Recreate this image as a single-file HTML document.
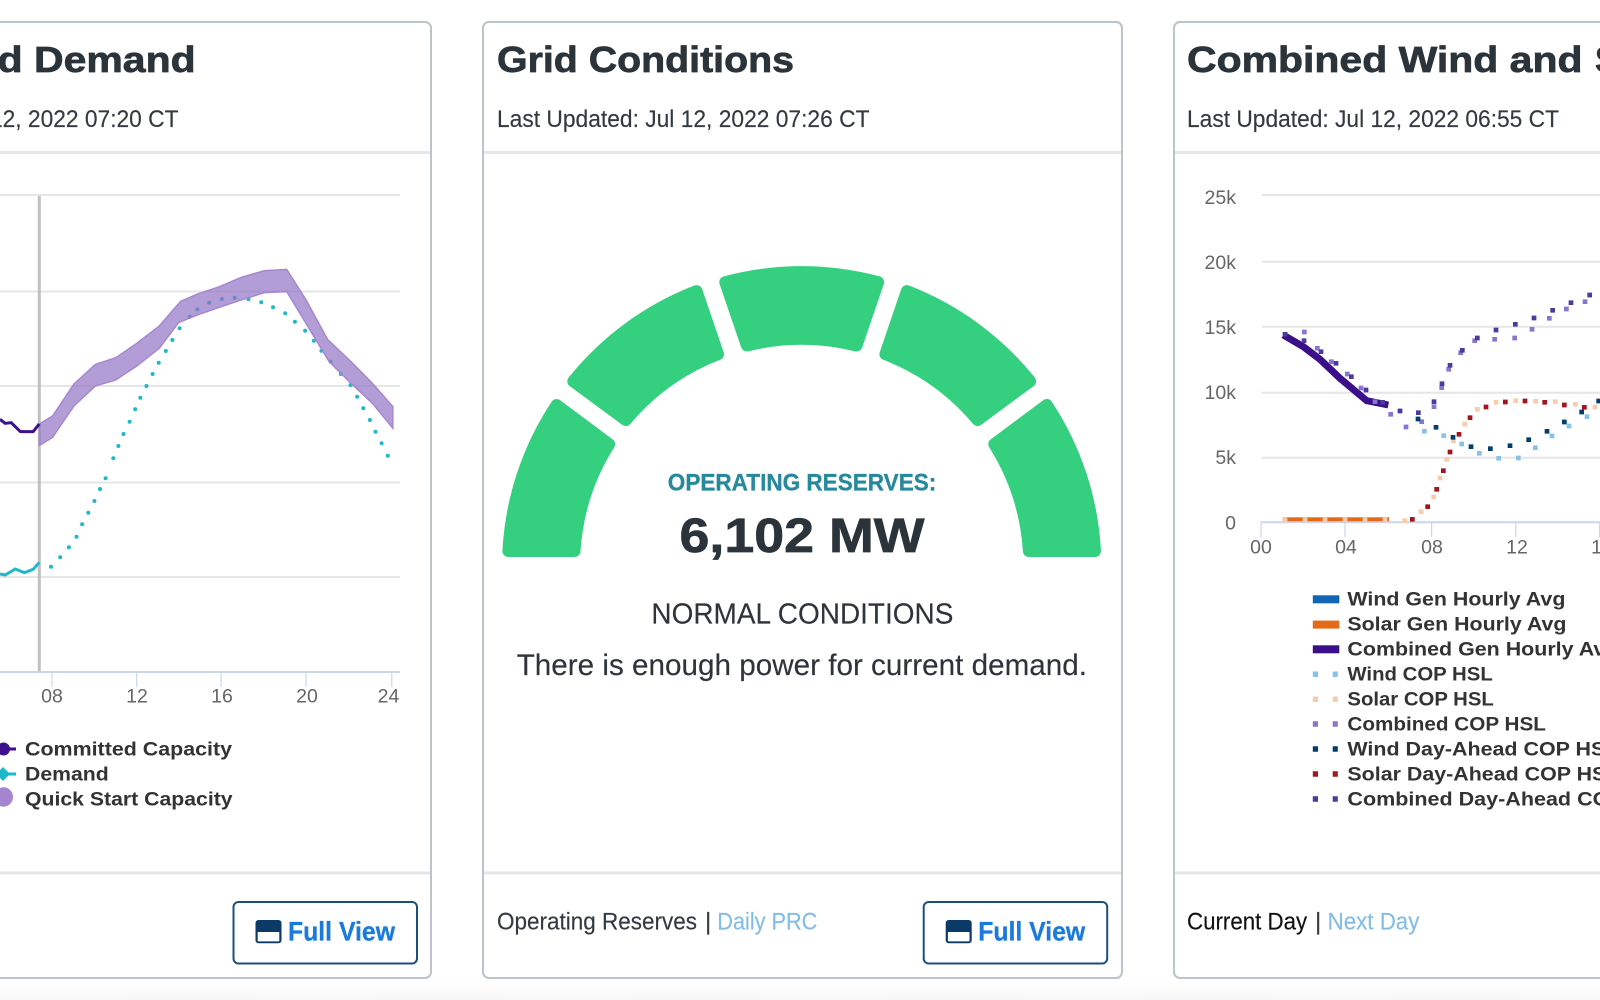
<!DOCTYPE html>
<html lang="en"><head><meta charset="utf-8"><title>Grid Conditions</title>
<style>
html,body{margin:0;padding:0;background:#fff;width:1600px;height:1000px;overflow:hidden}
svg{display:block;position:absolute;left:0;top:0}
text{font-family:"Liberation Sans",sans-serif}
.t{font-size:36px;font-weight:700;fill:#2c343b;stroke:#2c343b;stroke-width:.7px}
.u{font-size:24px;fill:#343a40;stroke:#343a40;stroke-width:.15px}
.f{font-size:24px;fill:#343a40;stroke:#343a40;stroke-width:.15px}
.v{font-size:26.5px;font-weight:700;fill:#1a7bdc;stroke:#1a7bdc;stroke-width:.3px}
.a{font-size:19.5px;fill:#666}
.l{font-size:19px;font-weight:700;fill:#333}
.gr{stroke:#e6e6e6;stroke-width:2;fill:none}
.ax{stroke:#ccd6eb;stroke-width:2;fill:none}
.tk{stroke:#ccd6eb;stroke-width:1.2;fill:none}
.card{fill:#fff;stroke:#bcc3c9;stroke-width:2}
.dv{stroke:#e4e6e8;stroke-width:3}
.btn{fill:#fff;stroke:#1d4f7c;stroke-width:2}
.dots{fill:none;stroke-width:14;stroke-linecap:square}
</style></head><body>
<svg width="1600" height="1000" viewBox="0 0 1600 1000" xmlns="http://www.w3.org/2000/svg">
<defs><linearGradient id="bg" x1="0" y1="0" x2="0" y2="1"><stop offset="0" stop-color="#fff"/><stop offset="1" stop-color="#f7f7f7"/></linearGradient></defs>
<rect x="0" y="980" width="1600" height="20" fill="url(#bg)"/>

<!-- cards -->
<rect class="card" x="-20" y="22" width="451" height="956" rx="6"/>
<rect class="card" x="483" y="22" width="639" height="956" rx="6"/>
<rect class="card" x="1174" y="22" width="480" height="956" rx="6"/>
<line class="dv" x1="0" x2="430" y1="152.5" y2="152.5"/>
<line class="dv" x1="484" x2="1121" y1="152.5" y2="152.5"/>
<line class="dv" x1="1175" x2="1600" y1="152.5" y2="152.5"/>
<line class="dv" x1="0" x2="430" y1="873" y2="873"/>
<line class="dv" x1="484" x2="1121" y1="873" y2="873"/>
<line class="dv" x1="1175" x2="1600" y1="873" y2="873"/>

<!-- headers -->
<text class="t" x="-2.4" y="72" textLength="198" lengthAdjust="spacingAndGlyphs">d Demand</text>
<text class="u" x="-193.5" y="127" textLength="372" lengthAdjust="spacingAndGlyphs">Last Updated: Jul 12, 2022 07:20 CT</text>
<text class="t" x="497" y="72" textLength="297" lengthAdjust="spacingAndGlyphs">Grid Conditions</text>
<text class="u" x="497" y="127" textLength="372.5" lengthAdjust="spacingAndGlyphs">Last Updated: Jul 12, 2022 07:26 CT</text>
<text class="t" x="1187" y="72" textLength="395.5" lengthAdjust="spacingAndGlyphs">Combined Wind and</text>
<text class="t" x="1595" y="72">S</text>
<text class="u" x="1187" y="127" textLength="372" lengthAdjust="spacingAndGlyphs">Last Updated: Jul 12, 2022 06:55 CT</text>

<!-- left chart -->
<g>
<line class="gr" x1="0" x2="400" y1="195" y2="195"/>
<line class="gr" x1="0" x2="400" y1="291.5" y2="291.5"/>
<line class="gr" x1="0" x2="400" y1="386" y2="386"/>
<line class="gr" x1="0" x2="400" y1="482.5" y2="482.5"/>
<line class="gr" x1="0" x2="400" y1="577" y2="577"/>
<line class="ax" x1="0" x2="400" y1="672" y2="672"/>
<path class="tk" d="M52 672V687M136.7 672V687M221 672V687M306 672V687M391.8 672V687"/>
<line x1="39.3" x2="39.3" y1="196" y2="671" stroke="#c0c0c0" stroke-width="3"/>
<path fill="none" stroke="#1fb8c9" stroke-width="4" stroke-linecap="round" d="M51 566.7h.01M60.2 557.3h.01M68.9 547.3h.01M76.5 536.7h.01M82.1 524.3h.01M88.3 512.7h.01M94.4 501h.01M100 489h.01M105.6 478.3h.01M113.3 458.3h.01M118.4 446h.01M123.5 434h.01M129.6 421.7h.01M135.2 409.3h.01M140.3 397.7h.01M146.4 386h.01M152.6 374h.01M158.7 362.7h.01M165.8 351h.01M172.4 340h.01M179.6 328.3h.01M189.8 316.7h.01M197.4 309.3h.01M209.2 302.7h.01M221.9 299h.01M234.7 297.7h.01M248.5 299.3h.01M261.2 302.3h.01M273 307.3h.01M285.2 313.3h.01M294.9 321.7h.01M305.1 330.7h.01M313.8 340.7h.01M321.4 350.7h.01M330.6 361.7h.01M340.8 374h.01M350.5 385h.01M357.1 396.7h.01M363.3 408.3h.01M369.9 420h.01M375.5 431.7h.01M381.6 443.3h.01M387.8 455.7h.01"/>
<g transform="scale(.5102 .33333)">
<path fill="#9273c4" fill-opacity=".7" stroke="#a585d0" stroke-width="1.4" vector-effect="non-scaling-stroke" d="M77 1272L103 1248 145 1152 187 1093 227 1073 268 1030 312 978 354 904 387 882 430 860 473 832 518 812 562 808 600 900 642 1018 688 1085 730 1150 770 1220 770 1285 730 1210 688 1150 645 1085 600 971 562 875 518 878 473 900 430 922 387 945 350 968 312 1045 268 1098 227 1140 187 1158 145 1218 103 1312 77 1337Z"/>
<path fill="none" stroke="#3d0f8c" stroke-width="3" vector-effect="non-scaling-stroke" d="M0 1258L10 1270 22 1268 40 1295 65 1295 77 1272"/>
<path fill="none" stroke="#1fb8c9" stroke-width="3" vector-effect="non-scaling-stroke" d="M0 1722L10 1725 30 1707 48 1718 65 1708 77 1687"/>
</g>
<g class="a" text-anchor="middle">
<text x="52" y="702.7">08</text><text x="137" y="702.7">12</text><text x="222" y="702.7">16</text><text x="307" y="702.7">20</text><text x="388.5" y="702.7">24</text>
</g>
<line x1="0" x2="16" y1="749" y2="749" stroke="#3d0f8c" stroke-width="3"/>
<circle cx="3.5" cy="749" r="6.5" fill="#3d0f8c"/>
<line x1="0" x2="16" y1="774" y2="774" stroke="#1fb8c9" stroke-width="3"/>
<path d="M3 767L10 774 3 781-4 774Z" fill="#1fb8c9"/>
<ellipse cx="3.5" cy="797" rx="9.5" ry="9.7" fill="#a585d0"/>
<text class="l" x="25" y="755.5" textLength="207" lengthAdjust="spacingAndGlyphs">Committed Capacity</text>
<text class="l" x="25" y="780.5" textLength="83.7" lengthAdjust="spacingAndGlyphs">Demand</text>
<text class="l" x="25" y="805.5" textLength="207.6" lengthAdjust="spacingAndGlyphs">Quick Start Capacity</text>
</g>

<!-- gauge -->
<g fill="#35d07f" stroke="#35d07f" stroke-width="12" stroke-linejoin="round">
<path d="M508.4 551A294 294 0 0 1 556.6 405L609.1 444.2A228 228 0 0 0 574.5 551Z"/>
<path d="M573.3 381.3A294 294 0 0 1 696.5 291.1L718 354.2A228 228 0 0 0 625.8 420Z"/>
<path d="M725.3 282.2A294 294 0 0 1 878.1 282.2L856.5 345.5A228 228 0 0 0 746.9 345.5Z"/>
<path d="M906.9 291.1A294 294 0 0 1 1030.1 381.3L977.6 420A228 228 0 0 0 885.4 354.2Z"/>
<path d="M1046.8 405A294 294 0 0 1 1095 551L1028.9 551A228 228 0 0 0 994.3 444.2Z"/>
</g>
<text x="667.8" y="490.7" font-size="24" font-weight="700" fill="#26899c" stroke="#26899c" stroke-width=".3" textLength="268.5" lengthAdjust="spacingAndGlyphs">OPERATING RESERVES:</text>
<text x="679.5" y="551.8" font-size="48" font-weight="700" fill="#2c343b" stroke="#2c343b" stroke-width=".7" textLength="245" lengthAdjust="spacingAndGlyphs">6,102 MW</text>
<text x="651.4" y="623.3" font-size="29" fill="#2e343a" stroke="#2e343a" stroke-width=".15" textLength="302" lengthAdjust="spacingAndGlyphs">NORMAL CONDITIONS</text>
<text x="516.7" y="675" font-size="30" fill="#2e343a" stroke="#2e343a" stroke-width=".15" textLength="570.3" lengthAdjust="spacingAndGlyphs">There is enough power for current demand.</text>

<!-- right chart -->
<line class="gr" x1="1261.7" x2="1600" y1="195" y2="195"/>
<line class="gr" x1="1261.7" x2="1600" y1="261.7" y2="261.7"/>
<line class="gr" x1="1261.7" x2="1600" y1="326.7" y2="326.7"/>
<line class="gr" x1="1261.7" x2="1600" y1="392.7" y2="392.7"/>
<line class="gr" x1="1261.7" x2="1600" y1="457.7" y2="457.7"/>
<rect x="1282.7" y="517.3" width="106.3" height="4.5" fill="#e46a1a"/>
<line class="ax" x1="1260.7" x2="1600" y1="522.3" y2="522.3"/>
<path class="tk" d="M1261 522V537M1345 522V537M1431.6 522V537M1515.8 522V537M1599.5 522V537"/>
<g transform="translate(1260 300) scale(.33333)">
<path fill="none" stroke="#3b0f8a" stroke-width="21" d="M70 105L130 140 180 178 240 235 320 302 385 315"/>
<path class="dots" stroke="#f7ccaa" d="M75 660h.1M135 660h.1M195 660h.1M255 660h.1M315 660h.1M375 660h.1M434 662h.1M483 635h.1M521 591h.1M540 534h.1M560 478h.1M580 422h.1M614 372h.1M652 328h.1M708 307h.1M767 302h.1M827 304h.1M886 305h.1M946 313h.1M1005 321h.1"/>
<path class="dots" stroke="#87c3e8" d="M493 394h.1M551 407h.1M605 432h.1M658 460h.1M716 475h.1M775 474h.1M826 443h.1M876 408h.1M927 378h.1M981 350h.1"/>
<path class="dots" stroke="#8b74d0" d="M133 96h.1M172 145h.1M214 185h.1M262 222h.1M303 264h.1M345 305h.1M392 343h.1M438 381h.1M485 365h.1M522 320h.1M545 263h.1M566 208h.1M602 158h.1M644 122h.1M704 118h.1M764 114h.1M816 88h.1M868 55h.1M919 27h.1M975 5h.1"/>
<path class="dots" stroke="#003f6b" d="M474 357h.1M528 382h.1M579 412h.1M633 440h.1M691 446h.1M750 437h.1M806 419h.1M861 394h.1M913 366h.1M965 336h.1M1016 303h.1"/>
<path class="dots" stroke="#a5141c" d="M457 658h.1M503 620h.1M530 568h.1M550 512h.1M570 456h.1M597 403h.1M630 353h.1M678 321h.1M736 306h.1M795 303h.1M854 307h.1M913 315h.1M973 322h.1"/>
<path class="dots" stroke="#4b3a9e" d="M75 103h.1M132 122h.1M183 155h.1M228 190h.1M274 230h.1M318 270h.1M368 307h.1M420 333h.1M475 338h.1M522 305h.1M546 251h.1M570 196h.1M607 151h.1M652 114h.1M708 90h.1M766 73h.1M822 54h.1M878 31h.1M933 8h.1M989 -15h.1"/>
</g>
<g class="a" text-anchor="end">
<text x="1236" y="204">25k</text><text x="1236" y="269">20k</text><text x="1236" y="334">15k</text><text x="1236" y="399">10k</text><text x="1236" y="464">5k</text><text x="1236" y="529.3">0</text>
</g>
<g class="a" text-anchor="middle">
<text x="1261" y="553.3">00</text><text x="1346" y="553.3">04</text><text x="1432" y="553.3">08</text><text x="1517" y="553.3">12</text><text x="1602" y="553.3">16</text>
</g>
<rect x="1312.8" y="595.3" width="26.5" height="8" fill="#1265b4"/>
<rect x="1312.8" y="620.6" width="26.5" height="8" fill="#e46a1a"/>
<rect x="1312.8" y="645.3" width="26.5" height="8" fill="#3b0f8a"/>
<path d="M1312.8 671.5h5.2v5.5h-5.2zM1332.7 671.5h5.1v5.5h-5.1z" fill="#87c3e8"/>
<path d="M1312.8 696.5h5.2v5.5h-5.2zM1332.7 696.5h5.1v5.5h-5.1z" fill="#f7ccaa"/>
<path d="M1312.8 721.3h5.2v5.5h-5.2zM1332.7 721.3h5.1v5.5h-5.1z" fill="#8b74d0"/>
<path d="M1312.8 746.3h5.2v5.5h-5.2zM1332.7 746.3h5.1v5.5h-5.1z" fill="#003f6b"/>
<path d="M1312.8 771.3h5.2v5.5h-5.2zM1332.7 771.3h5.1v5.5h-5.1z" fill="#a5141c"/>
<path d="M1312.8 796.3h5.2v5.5h-5.2zM1332.7 796.3h5.1v5.5h-5.1z" fill="#4b3a9e"/>
<text class="l" x="1347.4" y="605.7" textLength="218" lengthAdjust="spacingAndGlyphs">Wind Gen Hourly Avg</text>
<text class="l" x="1347.4" y="630.7" textLength="219" lengthAdjust="spacingAndGlyphs">Solar Gen Hourly Avg</text>
<text class="l" x="1347.4" y="655.7" textLength="271" lengthAdjust="spacingAndGlyphs">Combined Gen Hourly Avg</text>
<text class="l" x="1347.4" y="680.7" textLength="145.4" lengthAdjust="spacingAndGlyphs">Wind COP HSL</text>
<text class="l" x="1347.4" y="705.7" textLength="146.4" lengthAdjust="spacingAndGlyphs">Solar COP HSL</text>
<text class="l" x="1347.4" y="730.7" textLength="198.5" lengthAdjust="spacingAndGlyphs">Combined COP HSL</text>
<text class="l" x="1347.4" y="755.7" textLength="271" lengthAdjust="spacingAndGlyphs">Wind Day-Ahead COP HSL</text>
<text class="l" x="1347.4" y="780.7" textLength="272" lengthAdjust="spacingAndGlyphs">Solar Day-Ahead COP HSL</text>
<text class="l" x="1347.4" y="805.7" textLength="325" lengthAdjust="spacingAndGlyphs">Combined Day-Ahead COP HSL</text>

<!-- footers -->
<text class="f" x="497" y="929.3" textLength="200" lengthAdjust="spacingAndGlyphs">Operating Reserves</text>
<text class="f" x="705" y="929.3">|</text>
<text class="f" x="717.3" y="929.3" style="fill:#82bde5;stroke:#82bde5" textLength="100" lengthAdjust="spacingAndGlyphs">Daily PRC</text>
<text class="f" x="1187" y="929.3" style="fill:#111;stroke:#111" textLength="120.2" lengthAdjust="spacingAndGlyphs">Current Day</text>
<text class="f" x="1315" y="929.3">|</text>
<text class="f" x="1327.6" y="929.3" style="fill:#82bde5;stroke:#82bde5" textLength="91.8" lengthAdjust="spacingAndGlyphs">Next Day</text>

<!-- buttons -->
<g>
<rect class="btn" x="233.5" y="902" width="183.5" height="61.5" rx="5"/>
<rect x="255.5" y="920" width="26" height="23.3" rx="3" fill="#0b3a66"/>
<rect x="257.7" y="932" width="21.6" height="9.4" rx=".5" fill="#fff"/>
<text class="v" x="288" y="940.5" textLength="107" lengthAdjust="spacingAndGlyphs">Full View</text>
</g>
<g transform="translate(690.2 0)">
<rect class="btn" x="233.5" y="902" width="183.5" height="61.5" rx="5"/>
<rect x="255.5" y="920" width="26" height="23.3" rx="3" fill="#0b3a66"/>
<rect x="257.7" y="932" width="21.6" height="9.4" rx=".5" fill="#fff"/>
<text class="v" x="288" y="940.5" textLength="107" lengthAdjust="spacingAndGlyphs">Full View</text>
</g>
</svg>
</body></html>
